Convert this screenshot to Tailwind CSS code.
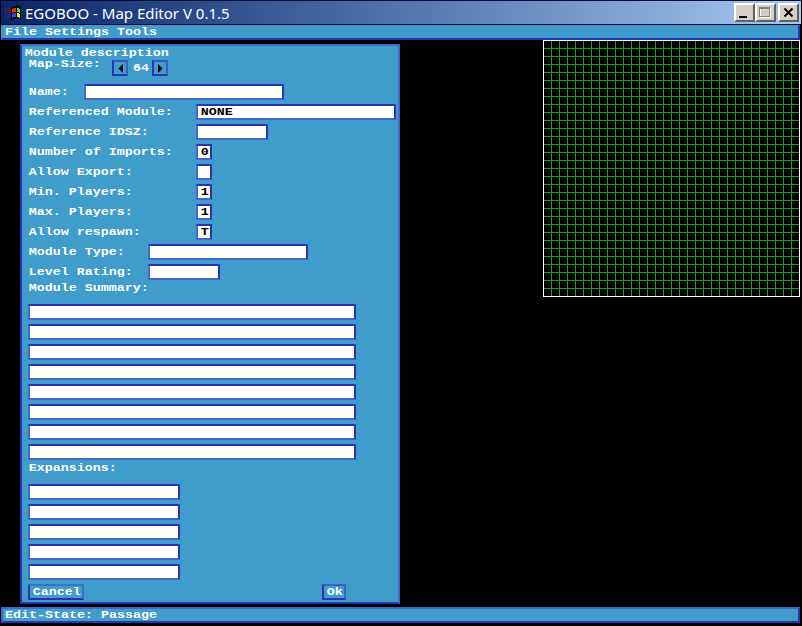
<!DOCTYPE html>
<html lang="en">
<head>
<meta charset="utf-8">
<title>EGOBOO - Map Editor V 0.1.5</title>
<script src="https://cdn.jsdelivr.net/npm/@tailwindcss/browser@4"></script>
</head>
<body class="w-[802px] h-[626px] overflow-hidden bg-black flex flex-col font-['Liberation_Mono',monospace] font-bold text-[10px] leading-4 text-white">
<header class="h-[25px] shrink-0 mx-[1px] flex items-center pl-[3px] pr-[2px] border-t border-b border-[#050a30] bg-linear-to-r from-[#0a246a] to-[#a6caf0]">
  <svg class="w-[17px] h-[16px] shrink-0" viewBox="0 0 17 16" shape-rendering="crispEdges">
    <path fill="#080808" d="M7 2h2v-1h3v-1h3v1h2v13h-2v-1h-3v1h-3v1h-2z"/>
    <path fill="#8c1830" d="M0 4h2v1h-2zM3 3h3v1h-3zM1 6h2v1h-2zM4 5h3v1h-3zM3 7h4v1h-4z"/>
    <path fill="#2828a8" d="M1 9h2v1h-2zM4 9h3v1h-3zM0 12h2v1h-2zM3 11h4v1h-4z"/>
    <path fill="#e03018" d="M8 4h1v-1h3v4h-3v1h-1z"/><path fill="#58d838" d="M13 3h2v1h1v4h-1v-1h-2z"/>
    <path fill="#3048e8" d="M8 9h1v-1h3v4h-3v1h-1z"/><path fill="#f0e828" d="M13 8h2v1h1v4h-1v-1h-2z"/>
  </svg>
  <h1 class="ml-1 grow whitespace-pre font-['Noto_Sans',sans-serif] font-normal text-[15px] leading-5">EGOBOO - Map Editor V 0.1.5</h1>
  <div class="flex text-black">
    <button class="w-[21px] h-[19px] bg-[#d4d0c8] border-2 border-t-white border-l-white border-r-[#606060] border-b-[#606060]"><svg class="w-[17px] h-[15px]" viewBox="0 0 17 15"><path d="M3 11h8v2h-8z"/></svg></button>
    <button class="w-[21px] h-[19px] bg-[#d4d0c8] border-2 border-t-white border-l-white border-r-[#606060] border-b-[#606060]"><svg class="w-[17px] h-[15px]" viewBox="0 0 17 15" fill="none" shape-rendering="crispEdges"><path stroke="#fff" d="M3.500 3.500h10v9h-10z"/><path stroke="#808080" d="M2.500 2.500h10v9h-10zM2 3.500h11"/></svg></button>
    <button class="ml-[2px] w-[21px] h-[19px] bg-[#d4d0c8] border-2 border-t-white border-l-white border-r-[#606060] border-b-[#606060]"><svg class="w-[17px] h-[15px]" viewBox="0 0 17 15"><path stroke="#000" stroke-width="2" d="M4.500 3.500l8 8M12.500 3.500l-8 8"/></svg></button>
  </div>
</header>

<nav class="h-[15px] w-[799px] ml-[1px] shrink-0 bg-[#409ccb] border-t border-l border-r-2 border-b-2 border-t-[#4b90cc] border-l-[#4b90cc] border-r-[#2a34b0] border-b-[#2a34b0] pl-[3px] leading-3">
  <div class="w-max origin-left scale-x-[1.333] translate-y-px whitespace-pre">File Settings Tools</div>
</nav>

<main class="h-[567px] shrink-0 flex justify-between items-start pl-5 pr-[2px]">
  <section class="mt-1 w-[380px] h-[560px] bg-[#409ccb] border-2 border-t-[#4169c8] border-r-[#4169c8] border-l-[#2a34b0] border-b-[#2a34b0] pl-[6px] flex flex-col">
    <h2 class="-ml-1 -mt-[1px] h-[15px] w-max origin-left scale-x-[1.333] translate-x-[0.7px] translate-y-px">Module description</h2>
    <div class="h-[26px] flex">
      <div class="w-[84px] -mt-1"><div class="w-max origin-left scale-x-[1.333] translate-x-[0.7px] translate-y-px">Map-Size:</div></div>
      <button class="size-4 border-2 border-l-[#2a34b0] border-b-[#2a34b0] border-t-[#3a55c0] border-r-[#3a60c4]"><svg class="size-3" viewBox="0 0 12 12"><path fill="#000" d="M9 2v9L4.500 6.500z"/></svg></button>
      <div class="w-6 pl-[5px] h-4"><div class="w-max origin-left scale-x-[1.333] translate-y-px">64</div></div>
      <button class="size-4 border-2 border-l-[#2a34b0] border-b-[#2a34b0] border-t-[#3a55c0] border-r-[#3a60c4]"><svg class="size-3" viewBox="0 0 12 12"><path fill="#000" d="M4 2v9L8.500 6.500z"/></svg></button>
    </div>
    <div id="fields" class="-mt-[2px] flex flex-col gap-1"></div>
    <div class="w-max h-4 origin-left scale-x-[1.333] translate-x-[0.7px] translate-y-px">Module Summary:</div>
    <div id="summary" class="mt-2 flex flex-col gap-1"></div>
    <div class="w-max h-4 origin-left scale-x-[1.333] translate-x-[0.7px] translate-y-px">Expansions:</div>
    <div id="expansions" class="mt-2 flex flex-col gap-1"></div>
    <div class="mt-1 flex justify-between pr-[52px]">
      <button class="w-14 h-4 border-2 border-l-[#2a34b0] border-b-[#2a34b0] border-t-[#3a75c4] border-r-[#3a75c4] pl-[2px] leading-3"><div class="w-max origin-left scale-x-[1.333] translate-x-[0.7px] translate-y-px">Cancel</div></button>
      <button class="w-6 h-4 border-2 border-l-[#2a34b0] border-b-[#2a34b0] border-t-[#3a60c4] border-r-[#3a60c4] pl-[2px] leading-3"><div class="w-max origin-left scale-x-[1.333] translate-x-[0.7px] translate-y-px">Ok</div></button>
    </div>
  </section>
  <svg class="w-[257px] h-[257px]" viewBox="0 0 257 257" shape-rendering="crispEdges">
    <defs><pattern id="cell" width="8" height="8" patternUnits="userSpaceOnUse"><path fill="#14a41c" d="M0 0h8v1h-7v7h-1z"/></pattern></defs>
    <path fill="url(#cell)" d="M0 0h257v257h-257z"/>
    <path fill="none" stroke="#fff" d="M.5.5h256v256h-256z"/>
  </svg>
</main>

<footer class="h-4 w-[799px] ml-[1px] shrink-0 bg-[#409ccb] border-2 border-t-[#4169c8] border-l-[#4169c8] border-r-[#2a34b0] border-b-[#2a34b0] pl-[2px] leading-3">
  <div class="w-max origin-left scale-x-[1.333] translate-y-px whitespace-pre">Edit-State: Passage</div>
</footer>

<script>
const box = (width, value = '') => `<div class="h-4 shrink-0 bg-white text-black border-2 border-t-[#2a34b0] border-r-[#2a34b0] border-l-[#4169c8] border-b-[#4169c8] pl-[2px] leading-3" style="width:${width}px"><div class="w-max origin-left scale-x-[1.333] translate-x-[0.7px] translate-y-px">${value}</div></div>`;
const fields = [
  ['Name:', 56, 200], ['Referenced Module:', 168, 200, 'NONE'], ['Reference IDSZ:', 168, 72],
  ['Number of Imports:', 168, 16, '0'], ['Allow Export:', 168, 16], ['Min. Players:', 168, 16, '1'],
  ['Max. Players:', 168, 16, '1'], ['Allow respawn:', 168, 16, 'T'], ['Module Type:', 120, 160], ['Level Rating:', 120, 72]
];
document.getElementById('fields').innerHTML = fields.map(([label, offset, width, value]) =>
  `<div class="flex h-4"><div class="shrink-0" style="width:${offset}px"><div class="w-max origin-left scale-x-[1.333] translate-x-[0.7px] translate-y-px">${label}</div></div>${box(width, value)}</div>`).join('');
document.getElementById('summary').innerHTML = box(328).repeat(8);
document.getElementById('expansions').innerHTML = box(152).repeat(5);
</script>
</body>
</html>
